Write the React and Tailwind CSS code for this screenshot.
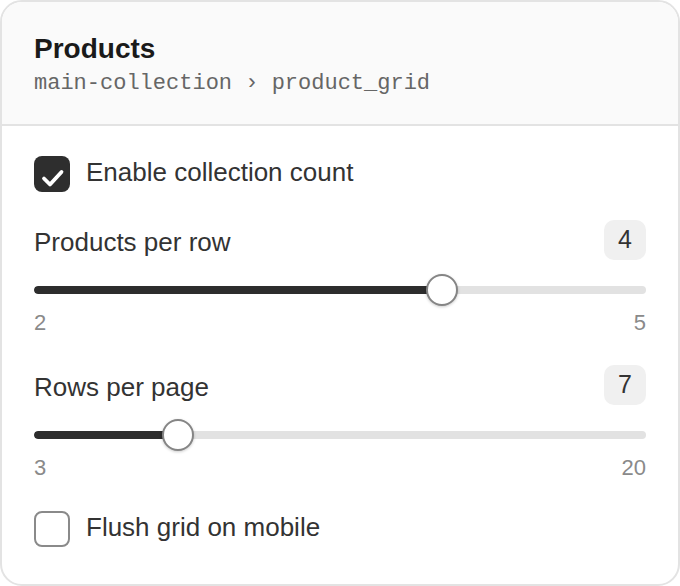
import { useState } from 'react';

const sans = { fontFamily: '"Liberation Sans", Arial, sans-serif' };

function Checkbox({ checked, onChange, label }) {
  return (
    <label className="flex items-center gap-4 cursor-pointer select-none">
      <button
        type="button"
        onClick={() => onChange(!checked)}
        className={
          checked
            ? 'w-9 h-9 rounded-lg bg-[#2e2e2e] flex items-center justify-center'
            : 'w-9 h-9 rounded-lg border-2 border-[#8a8a8a] bg-white'
        }
      >
        {checked && (
          <svg width="36" height="36" viewBox="0 0 36 36" fill="none">
            <path d="M10 22.5l6 6L27.5 16" stroke="white" strokeWidth="3.8" strokeLinecap="round" strokeLinejoin="round" />
          </svg>
        )}
      </button>
      <span className="text-[26px] leading-none pb-1 text-[#333]">{label}</span>
    </label>
  );
}

function RangeField({ label, min, max, value, onChange }) {
  const pct = ((value - min) / (max - min)) * 100;
  return (
    <div>
      <div className="flex items-center justify-between h-10">
        <span className="text-[26px] leading-none pt-1 text-[#333]">{label}</span>
        <span className="h-10 min-w-[42px] px-3 rounded-[10px] bg-[#f0f0f0] flex items-center justify-center text-[25px] text-[#333]">
          {value}
        </span>
      </div>
      <div className="relative h-8 mt-[14px] flex items-center">
        <div className="w-full h-2 rounded-full bg-[#e2e2e2] overflow-hidden">
          <div className="h-full bg-[#2d2d2d] rounded-full" style={{ width: `${pct}%` }} />
        </div>
        <input
          type="range"
          min={min}
          max={max}
          value={value}
          onChange={e => onChange(Number(e.target.value))}
          className="absolute inset-0 w-full opacity-0 cursor-pointer"
        />
        <div
          className="absolute top-0 w-8 h-8 -ml-4 rounded-full bg-white border-2 border-[#858585] shadow-[0_1px_3px_rgba(0,0,0,0.2)] pointer-events-none"
          style={{ left: `${pct}%` }}
        />
      </div>
      <div className="flex justify-between mt-[5px] text-[22px] leading-6 text-[#8a8a8a]">
        <span>{min}</span>
        <span>{max}</span>
      </div>
    </div>
  );
}

export default function App() {
  const [showCount, setShowCount] = useState(true);
  const [perRow, setPerRow] = useState(4);
  const [rows, setRows] = useState(7);
  const [flush, setFlush] = useState(false);

  return (
    <div className="bg-white" style={sans}>
      <div className="w-[680px] h-[586px] border-2 border-[#e3e3e3] rounded-[22px] overflow-hidden bg-white">
        {/* header */}
        <div className="bg-[#fafafa] border-b-2 border-[#e3e3e3] px-8 pt-8 h-[124px]">
          <h2 className="text-[28px] leading-[30px] font-bold text-[#1a1a1a]">Products</h2>
          <p
            className="mt-1 text-[22px] leading-8 text-[#666]"
            style={{ fontFamily: '"Liberation Mono", "Courier New", monospace' }}
          >
            main-collection › product_grid
          </p>
        </div>

        {/* settings */}
        <div className="px-8 pt-[30px]">
          <Checkbox checked={showCount} onChange={setShowCount} label="Enable collection count" />
          <div className="mt-7">
            <RangeField label="Products per row" min={2} max={5} value={perRow} onChange={setPerRow} />
          </div>
          <div className="mt-[30px]">
            <RangeField label="Rows per page" min={3} max={20} value={rows} onChange={setRows} />
          </div>
          <div className="mt-[31px]">
            <Checkbox checked={flush} onChange={setFlush} label="Flush grid on mobile" />
          </div>
        </div>
      </div>
    </div>
  );
}
